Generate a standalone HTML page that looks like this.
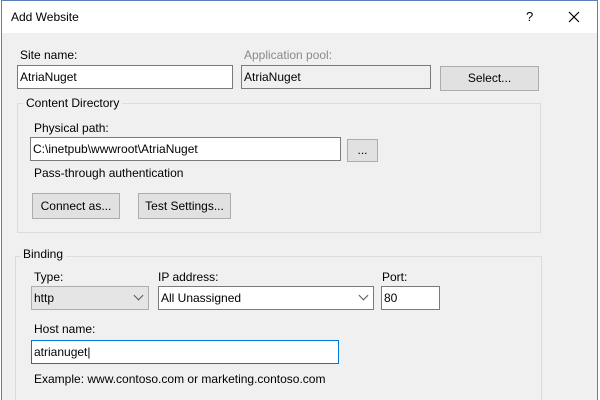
<!DOCTYPE html><html style="overflow:hidden;height:400px"><head><style>
body{margin:0;width:600px;height:400px;overflow:hidden;background:#fff;font-family:"Liberation Sans",sans-serif;font-size:12px;color:#000;position:relative}
.win{position:absolute;left:1px;top:0;width:595px;height:399px;border:1px solid #5b7fb8;border-bottom:none;background:#f0f0f0}
.tb{position:absolute;left:0;top:0;right:0;height:32px;background:#fff}
.a{position:absolute;white-space:nowrap}
.in{position:absolute;background:#fff;border:1px solid #7a7a7a;box-sizing:border-box;padding:4px 2px;line-height:14px}
.btn{position:absolute;background:#e1e1e1;border:1px solid #adadad;box-sizing:border-box;text-align:center;line-height:22px}
.grp{position:absolute;border:1px solid #dcdcdc}
.lg{position:absolute;background:#f0f0f0;padding:0 3px}
.chev{position:absolute;right:6px;top:5px;width:6px;height:6px;border-right:1px solid #555;border-bottom:1px solid #555;transform:rotate(45deg)}
</style></head><body>
<div class="win">
<div class="tb"></div>
<div class="a" style="left:9px;top:9px">Add Website</div>
<div class="a" style="left:524px;top:8px;font-size:13px">?</div>
<svg class="a" style="left:566px;top:10px" width="12" height="12"><path d="M1 1L11 11M11 1L1 11" stroke="#000" stroke-width="1.2"/></svg>
</div>
<div class="a" style="left:20px;top:48px">Site name:</div>
<div class="a" style="left:244px;top:48px;color:#8a8a8a">Application pool:</div>
<div class="in" style="left:17px;top:65px;width:216px;height:24px">AtriaNuget</div>
<div class="in" style="left:241px;top:65px;width:190px;height:24px;background:#f0f0f0">AtriaNuget</div>
<div class="btn" style="left:440px;top:66px;width:99px;height:25px">Select...</div>
<div class="grp" style="left:17px;top:103px;width:522px;height:128px"></div>
<div class="lg" style="left:23px;top:96px">Content Directory</div>
<div class="a" style="left:34px;top:121px">Physical path:</div>
<div class="in" style="left:30px;top:137px;width:311px;height:24px">C:\inetpub\wwwroot\AtriaNuget</div>
<div class="btn" style="left:347px;top:139px;width:31px;height:23px;line-height:20px">...</div>
<div class="a" style="left:34px;top:166px">Pass-through authentication</div>
<div class="btn" style="left:32px;top:193px;width:88px;height:26px;line-height:24px">Connect as...</div>
<div class="btn" style="left:138px;top:193px;width:93px;height:26px;line-height:24px">Test Settings...</div>
<div class="grp" style="left:15px;top:256px;width:525px;height:150px"></div>
<div class="lg" style="left:20px;top:247px">Binding</div>
<div class="a" style="left:34px;top:270px">Type:</div>
<div class="a" style="left:158px;top:270px">IP address:</div>
<div class="a" style="left:382px;top:270px">Port:</div>
<div class="in" style="left:31px;top:286px;width:118px;height:24px;background:#e5e5e5;border-color:#adadad">http<span class="chev"></span></div>
<div class="in" style="left:158px;top:286px;width:216px;height:24px">All Unassigned<span class="chev"></span></div>
<div class="in" style="left:381px;top:286px;width:59px;height:24px">80</div>
<div class="a" style="left:34px;top:322px">Host name:</div>
<div class="in" style="left:31px;top:340px;width:308px;height:24px;border-color:#0078d7">atrianuget|</div>
<div class="a" style="left:34px;top:372px">Example: www.contoso.com or marketing.contoso.com</div>
</body></html>
